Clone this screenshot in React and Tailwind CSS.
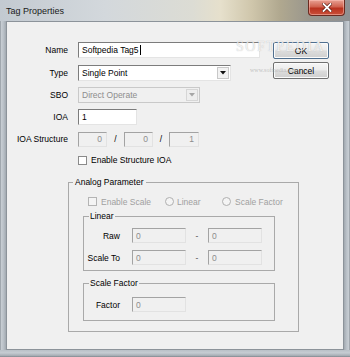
import React from "react";

function Box({ w, h = "h-[16px]", disabled = false, align = "left", children }) {
  return (
    <div
      className={`${w} ${h} flex items-center border-t border-l border-r border-b ${
        disabled
          ? "bg-[#f0f0f0] border-t-[#a3a3a3] border-l-[#a3a3a3] border-r-[#e2e2e2] border-b-[#e2e2e2] text-[#8d8d8d]"
          : "bg-white border-t-[#7c7c7c] border-l-[#7c7c7c] border-r-[#e4e4e4] border-b-[#e4e4e4] text-black"
      } ${align === "right" ? "justify-end pr-[4px]" : "pl-[3px]"}`}
    >
      {children}
    </div>
  );
}

function Row({ label, mt, h = "h-[16px]", children }) {
  return (
    <div className={`flex items-center ${h} ${mt}`}>
      <div className="w-[62px] text-right whitespace-nowrap">{label}</div>
      <div className="ml-[10px] flex items-center">{children}</div>
    </div>
  );
}

function Btn({ children, def }) {
  return (
    <div
      className={`w-[56px] h-[17px] flex items-center justify-center rounded-[2px] border ${
        def ? "border-[#4f6f8f]" : "border-[#707070]"
      } bg-[linear-gradient(180deg,#f6f6f6_0%,#ebebeb_48%,#dddddd_52%,#cfcfcf_100%)] shadow-[inset_0_0_0_1px_#fbfbfb]`}
    >
      {children}
    </div>
  );
}

function Check({ disabled }) {
  return (
    <div
      className={`w-[9px] h-[9px] border ${
        disabled ? "border-[#b4b4b4] bg-[#f4f4f4]" : "border-[#8a8a8a] bg-white"
      }`}
    />
  );
}

function Radio() {
  return <div className="w-[9px] h-[9px] rounded-full border border-[#b0b0b0] bg-[#f4f4f4]" />;
}

function Arrow({ disabled }) {
  return (
    <div
      className={`w-[12px] h-[12px] mr-[1px] flex items-center justify-center border ${
        disabled ? "border-[#d6d6d6] bg-[#eeeeee]" : "border-[#c8c8c8] bg-[#f2f2f2]"
      }`}
    >
      <svg width="6" height="4" viewBox="0 0 6 4">
        <path d="M0 0 L6 0 L3 3.5 Z" fill={disabled ? "#a6a6a6" : "#111"} />
      </svg>
    </div>
  );
}

export default function App() {
  return (
    <div className="w-[350px] h-[357px] overflow-hidden relative flex flex-col bg-[#aeb5bc] font-['Liberation_Sans',Arial,sans-serif] text-[8.5px] leading-[10px] text-black">
      {/* Title bar */}
      <div className="h-[21px] flex items-center relative bg-[linear-gradient(90deg,#c3cad1_0%,#d3d8dc_30%,#dcdcd4_55%,#e6e0cc_63%,#cfc6ab_72%,#b0a88f_80%,#9a978d_88%,#8e9093_100%)]">
        <span className="ml-[6px] mt-[1px] text-[9px] text-[#1a1a1a]">Tag Properties</span>
        <div className="absolute left-[308px] top-0 w-[37px] h-[16px] rounded-b-[4px] border border-t-0 border-[#6b2a20] bg-[linear-gradient(180deg,#e9a193_0%,#d0624f_45%,#b9321f_55%,#c9503a_100%)] flex items-center justify-center shadow-[inset_0_0_0_1px_rgba(255,200,190,0.5)]">
          <svg width="10" height="9" viewBox="0 0 10 9">
            <path d="M1.5 1 L8.5 8 M8.5 1 L1.5 8" stroke="#5a1a10" strokeWidth="3.2" strokeLinecap="square" />
            <path d="M1.5 1 L8.5 8 M8.5 1 L1.5 8" stroke="#ffffff" strokeWidth="1.8" strokeLinecap="square" />
          </svg>
        </div>
      </div>

      <div className="flex h-[329px]">
        <div className="w-[6px] bg-[linear-gradient(90deg,#8f969d_0%,#c6ccd2_25%,#b9c0c7_60%,#a2a9b0_100%)]" />
        <div className="w-[338px] bg-[#f0f0f0] shadow-[inset_0_0_0_1px_#8c939a] flex flex-col relative">
          {/* Top section */}
          <div className="flex pt-[21px]">
            <div className="w-[267px] flex flex-col">
              <Row label="Name">
                <Box w="w-[182px]">
                  <span>Softpedia Tag5</span>
                  <span className="ml-[1px] w-[1px] h-[10px] bg-black" />
                </Box>
              </Row>
              <Row label="Type" mt="mt-[7px]">
                <div className="w-[153px] h-[16px] flex items-center justify-between bg-white border border-t-[#7c7c7c] border-l-[#7c7c7c] border-r-[#e4e4e4] border-b-[#e4e4e4] pl-[3px]">
                  <span>Single Point</span>
                  <Arrow />
                </div>
              </Row>
              <Row label="SBO" mt="mt-[6px]">
                <div className="w-[122px] h-[16px] flex items-center justify-between bg-[#f0f0f0] border border-[#c9c9c9] pl-[3px] text-[#8d8d8d]">
                  <span>Direct Operate</span>
                  <Arrow disabled />
                </div>
              </Row>
              <Row label="IOA" mt="mt-[6px]">
                <Box w="w-[59px]">1</Box>
              </Row>
              <Row label="IOA Structure" mt="mt-[6px]">
                <Box w="w-[29px]" h="h-[15px]" disabled align="right">0</Box>
                <span className="w-[17px] text-center">/</span>
                <Box w="w-[29px]" h="h-[15px]" disabled align="right">0</Box>
                <span className="w-[16px] text-center">/</span>
                <Box w="w-[30px]" h="h-[15px]" disabled align="right">1</Box>
              </Row>
              <div className="flex items-center h-[10px] mt-[8px] ml-[72px]">
                <Check />
                <span className="ml-[4px]">Enable Structure IOA</span>
              </div>
            </div>
            <div className="flex flex-col gap-[3px]">
              <Btn def>OK</Btn>
              <Btn>Cancel</Btn>
            </div>
          </div>

          {/* Analog Parameter */}
          <fieldset className="mt-[12px] ml-[62px] w-[231px] h-[155px] border border-[#a9a9a9] m-0 p-0 min-w-0">
            <legend className="ml-[4px] px-[2px] leading-[10px]">Analog Parameter</legend>
            <div className="flex items-center h-[9px] mt-[10px] ml-[19px] text-[#a0a0a0]">
              <div className="w-[77px] flex items-center">
                <Check disabled />
                <span className="ml-[4px]">Enable Scale</span>
              </div>
              <div className="w-[57px] flex items-center">
                <Radio />
                <span className="ml-[3px]">Linear</span>
              </div>
              <div className="flex items-center">
                <Radio />
                <span className="ml-[4px]">Scale Factor</span>
              </div>
            </div>

            <fieldset className="mt-[5px] ml-[14px] w-[192px] h-[60px] border border-[#a9a9a9] m-0 p-0 min-w-0">
              <legend className="ml-[5px] px-[1px] leading-[10px]">Linear</legend>
              <div className="flex items-center h-[15px] mt-[7px]">
                <span className="w-[36px] text-right">Raw</span>
                <div className="ml-[12px]"><Box w="w-[54px]" h="h-[15px]" disabled>0</Box></div>
                <span className="w-[22px] text-center text-[#555]">-</span>
                <Box w="w-[54px]" h="h-[15px]" disabled>0</Box>
              </div>
              <div className="flex items-center h-[15px] mt-[7px]">
                <span className="w-[36px] text-right whitespace-nowrap">Scale To</span>
                <div className="ml-[12px]"><Box w="w-[54px]" h="h-[15px]" disabled>0</Box></div>
                <span className="w-[22px] text-center text-[#555]">-</span>
                <Box w="w-[54px]" h="h-[15px]" disabled>0</Box>
              </div>
            </fieldset>

            <fieldset className="mt-[7px] ml-[14px] w-[192px] h-[43px] border border-[#a9a9a9] m-0 p-0 min-w-0">
              <legend className="ml-[5px] px-[1px] leading-[10px]">Scale Factor</legend>
              <div className="flex items-center h-[15px] mt-[9px]">
                <span className="w-[36px] text-right">Factor</span>
                <div className="ml-[12px]"><Box w="w-[54px]" h="h-[15px]" disabled>0</Box></div>
              </div>
            </fieldset>
          </fieldset>

          {/* watermark */}
          <div className="absolute left-[230px] top-[19px] font-['Liberation_Serif',serif] text-[14px] leading-[14px] tracking-[1.5px] text-white/80 [text-shadow:0_0_1px_rgba(120,120,120,0.6)] pointer-events-none">
            SOFTPEDIA
          </div>
          <div className="absolute left-[244px] top-[46px] font-['Liberation_Serif',serif] text-[6px] leading-[6px] text-[#a8a8a8]/70 pointer-events-none">
            www.softpedia.com
          </div>
        </div>
        <div className="w-[6px] bg-[linear-gradient(90deg,#a2a9b0_0%,#b9c0c7_40%,#c6ccd2_75%,#8f969d_100%)]" />
      </div>
      <div className="h-[7px] bg-[linear-gradient(180deg,#b9c0c7_0%,#c6ccd2_40%,#a7aeb5_80%,#7f868d_100%)]" />
    </div>
  );
}
